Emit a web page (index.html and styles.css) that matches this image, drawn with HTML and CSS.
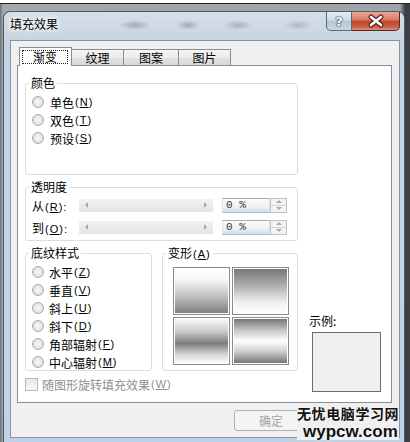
FILE: index.html
```html
<!DOCTYPE html>
<html>

<head>
  <title>填充效果</title>
  <meta charset="UTF-8">
  <link rel="stylesheet" href="styles.css">
</head>

<body>
  <div class="desk-top"></div>
  <div class="window">
    <div class="titlebar">
      <span class="title">填充效果</span>
      <div class="caption-buttons">
        <span class="btn-help">?</span>
        <span class="btn-close">
          <svg width="48" height="19" viewBox="0 0 48 19">
            <path d="M19 5 L29 13 M29 5 L19 13" stroke="#5a1f17" stroke-width="5" stroke-linecap="round"/>
            <path d="M19 5 L29 13 M29 5 L19 13" stroke="#fff" stroke-width="2.6" stroke-linecap="round"/>
          </svg>
        </span>
      </div>
    </div>

    <div class="client">
      <div class="tabs">
        <span class="tab active"><span class="focus">渐变</span></span>
        <span class="tab">纹理</span>
        <span class="tab tab-wide">图案</span>
        <span class="tab">图片</span>
      </div>

      <div class="panel">
        <fieldset class="group group-colors">
          <legend>颜色</legend>
          <div class="radios">
            <label class="radio"><i></i>单色<span class="key">(<u>N</u>)</span></label>
            <label class="radio"><i></i>双色<span class="key">(<u>T</u>)</span></label>
            <label class="radio"><i></i>预设<span class="key">(<u>S</u>)</span></label>
          </div>
        </fieldset>

        <fieldset class="group group-alpha">
          <legend>透明度</legend>
          <div class="alpha-rows">
            <div class="alpha-row">
              <span class="alpha-label">从<span class="key">(<u>R</u>):</span></span>
              <div class="scroll"><i class="arrow-l"></i><i class="arrow-r"></i></div>
              <div class="spin">
                <span class="spin-field">0 %</span>
                <span class="spin-btns"><i class="up"></i><i class="down"></i></span>
              </div>
            </div>
            <div class="alpha-row">
              <span class="alpha-label">到<span class="key">(<u>O</u>):</span></span>
              <div class="scroll"><i class="arrow-l"></i><i class="arrow-r"></i></div>
              <div class="spin">
                <span class="spin-field">0 %</span>
                <span class="spin-btns"><i class="up"></i><i class="down"></i></span>
              </div>
            </div>
          </div>
        </fieldset>

        <fieldset class="group group-shading">
          <legend>底纹样式</legend>
          <div class="radios">
            <label class="radio"><i></i>水平<span class="key">(<u>Z</u>)</span></label>
            <label class="radio"><i></i>垂直<span class="key">(<u>V</u>)</span></label>
            <label class="radio"><i></i>斜上<span class="key">(<u>U</u>)</span></label>
            <label class="radio"><i></i>斜下<span class="key">(<u>D</u>)</span></label>
            <label class="radio"><i></i>角部辐射<span class="key">(<u>F</u>)</span></label>
            <label class="radio"><i></i>中心辐射<span class="key">(<u>M</u>)</span></label>
          </div>
        </fieldset>

        <fieldset class="group group-variants">
          <legend>变形<span class="key">(<u>A</u>)</span></legend>
          <div class="tiles">
            <span class="tile tile-1"></span>
            <span class="tile tile-2"></span>
            <span class="tile tile-3"></span>
            <span class="tile tile-4"></span>
          </div>
        </fieldset>

        <div class="sample">
          <span class="sample-label">示例:</span>
          <div class="sample-box"></div>
        </div>

        <label class="check"><i></i>随图形旋转填充效果<span class="key">(<u>W</u>)</span></label>
      </div>

      <div class="buttons">
        <span class="button">确定</span>
      </div>

      <div class="watermark">
        <div class="wm-cn">无忧电脑学习网</div>
        <div class="wm-en">wypcw.com</div>
      </div>
    </div>
  </div>
</body>
</html>
```

FILE: styles.css
```css
*{
  box-sizing:border-box;
}

html,
body{
  margin:0;
}

body{
  width:410px;
  height:442px;
  overflow:hidden;
  background:linear-gradient(to right, #6d7278 0, #a3a8ad 3px, #9ea4aa 400px, #3c4046 405px);
  font-family:"Noto Sans CJK SC", sans-serif;
  font-size:12px;
  color:#000;
  text-autospace:no-autospace;
}

.key{
  margin-left:1px;
  font-family:"Liberation Sans", sans-serif;
  font-size:11px;
  letter-spacing:1px;
}
.key u{
  text-underline-offset:1px;
}

.desk-top{
  height:4px;
  background:#fff;
  border-bottom:1px solid #1d1d1d;
}

/* window frame */
.window{
  height:431px;
  margin:7px 5px 0 3px;
  padding:0 4px 4px 6px;
  border:1px solid #505a64;
  border-bottom:0;
  border-radius:7px 7px 0 0;
  background:linear-gradient(to bottom, #d6dfe8 0, #c7d4e1 28px, #c2d4e7 60px, #bfd3e8 100%);
  display:flex;
  flex-direction:column;
}

.titlebar{
  height:28px;
  display:flex;
  justify-content:space-between;
  background:
    radial-gradient(ellipse 16px 5px at 125px 13px, rgba(70,80,90,0.35), transparent),
    radial-gradient(ellipse 12px 5px at 178px 13px, rgba(70,80,90,0.35), transparent),
    radial-gradient(ellipse 14px 5px at 228px 13px, rgba(70,80,90,0.3), transparent),
    radial-gradient(ellipse 14px 5px at 288px 13px, rgba(70,80,90,0.25), transparent);
}

.title{
  margin-top:4px;
  line-height:16px;
  text-shadow:0 0 6px #fff, 0 0 6px #fff, 0 0 3px #fff;
}

.caption-buttons{
  display:flex;
}

.btn-help{
  width:26px;
  height:19px;
  border:1px solid #5d6976;
  border-top:0;
  border-radius:0 0 0 5px;
  background:linear-gradient(to bottom, #e4ebf2 0, #d2dce6 45%, #b7c6d5 50%, #c9d6e3 100%);
  display:flex;
  justify-content:center;
  align-items:center;
  color:#fff;
  font:bold 13px "DejaVu Sans", sans-serif;
  text-shadow:0 0 1px #2c3845, 0 0 1px #2c3845, 0 0 2px #2c3845;
}

.btn-close{
  width:48px;
  height:19px;
  border:1px solid #5e2018;
  border-top:0;
  border-left:0;
  border-radius:0 0 5px 0;
  background:linear-gradient(to bottom, #e9a794 0, #d87c65 45%, #c3452e 50%, #cc6249 85%, #df9a80 100%);
}
.btn-close svg{
  display:block;
}

/* client area */
.client{
  position:relative;
  height:398px;
  border:1px solid #8395a9;
  background:#f0f0f0;
}

.tabs{
  position:relative;
  z-index:1;
  height:25px;
  margin-bottom:-1px;
  padding-left:8px;
  display:flex;
  align-items:flex-end;
}

.tab{
  width:53px;
  height:16px;
  margin-bottom:1px;
  margin-left:-1px;
  border:1px solid #898c95;
  border-bottom:0;
  background:linear-gradient(to bottom, #f4f4f4 0, #ececec 50%, #e2e2e2 51%, #d9d9d9 100%);
  text-align:center;
  line-height:15px;
}
.tab-wide{
  width:56px;
}
.tab.active{
  position:relative;
  z-index:2;
  height:19px;
  margin:0;
  background:#fff;
  padding:2px 3px 0 2px;
}
.tab .focus{
  display:block;
  height:14px;
  border:1px dotted #222;
  line-height:12px;
}

.panel{
  height:338px;
  margin:0 7px 0 6px;
  padding:9px 0 0 7px;
  border:1px solid #898c95;
  background:#fff;
  display:grid;
  grid-template-columns:127px 136px 1fr;
  grid-template-rows:100px 62px 126px 16px;
  column-gap:10px;
  row-gap:4px;
}

.group{
  margin:0;
  padding:0;
  min-width:0;
  border:1px solid #d5dfe5;
  border-radius:3px;
}
.group legend{
  margin-left:3px;
  padding:0 2px;
  line-height:16px;
}
.group-colors{
  grid-column:1 / 3;
  grid-row:1;
}
.group-alpha{
  grid-column:1 / 3;
  grid-row:2;
}
.group-shading{
  grid-column:1;
  grid-row:3;
}
.group-variants{
  grid-column:2;
  grid-row:3;
}

.radios{
  padding:2px 0 0 6px;
}
.radio{
  height:18px;
  display:flex;
  align-items:center;
  white-space:nowrap;
}
.radio i{
  flex:none;
  width:12px;
  height:12px;
  margin-right:6px;
  border:1px solid #a9a9a9;
  border-radius:50%;
  background:radial-gradient(circle at 50% 50%, #fafafa 0, #e6e6e6 55%, #cfcfcf 100%);
}
.group-shading .radio i{
  margin-right:5px;
}

/* transparency rows */
.alpha-rows{
  padding-left:6px;
  display:flex;
  flex-direction:column;
  gap:2px;
}
.alpha-row{
  height:20px;
  display:flex;
  align-items:center;
}
.alpha-label{
  width:47px;
}
.scroll{
  width:134px;
  height:13px;
  padding:0 6px;
  background:linear-gradient(to bottom, #f1f1f1, #e5e5e5);
  display:flex;
  justify-content:space-between;
  align-items:center;
}
.arrow-l{
  border-top:3px solid transparent;
  border-bottom:3px solid transparent;
  border-right:3px solid #a7a7a7;
}
.arrow-r{
  border-top:3px solid transparent;
  border-bottom:3px solid transparent;
  border-left:3px solid #a7a7a7;
}

.spin{
  margin-left:9px;
  height:15px;
  display:flex;
}
.spin-field{
  width:48px;
  padding-left:3px;
  border:1px solid;
  border-color:#abadb3 #dbdfe6 #a6bfd8 #e2e3ea;
  background:linear-gradient(to bottom, #fbfbfb 0, #f0f0f0 60%, #cddcec 100%);
  line-height:13px;
  font-family:"Liberation Mono", monospace;
  font-size:11px;
  color:#333;
}
.spin-btns{
  width:17px;
  display:flex;
  flex-direction:column;
  border:1px solid #c3c3c3;
  background:#f3f3f3;
}
.spin-btns i{
  flex:1;
  display:flex;
  justify-content:center;
  align-items:center;
}
.spin-btns .up{
  border-bottom:1px solid #d2d2d2;
}
.spin-btns .up::after{
  content:"";
  border-left:3px solid transparent;
  border-right:3px solid transparent;
  border-bottom:3px solid #a9a9a9;
}
.spin-btns .down::after{
  content:"";
  border-left:3px solid transparent;
  border-right:3px solid transparent;
  border-top:3px solid #a9a9a9;
}

/* variant tiles */
.tiles{
  padding:5px 0 0 10px;
  display:grid;
  grid-template-columns:57px 57px;
  grid-template-rows:48px 48px;
  gap:2px;
}
.tile{
  border:1px solid #8a8a8a;
  box-shadow:inset 0 0 0 1px #fff;
}
.tile-1{
  background:linear-gradient(to bottom, #fff 0, #f6f6f6 25%, #c4c4c4 60%, #7a7a7a 100%);
}
.tile-2{
  background:linear-gradient(to bottom, #737373 0, #a9a9a9 35%, #f0f0f0 75%, #fff 100%);
}
.tile-3{
  background:linear-gradient(to bottom, #fff 0, #c8c8c8 30%, #7c7c7c 55%, #d8d8d8 80%, #fff 100%);
}
.tile-4{
  background:linear-gradient(to bottom, #6f6f6f 0, #d0d0d0 30%, #fff 50%, #d0d0d0 72%, #6f6f6f 100%);
}

.sample{
  grid-column:3;
  grid-row:3 / 5;
  align-self:end;
  margin-bottom:-1px;
  padding-left:1px;
  display:flex;
  flex-direction:column;
}
.sample-label{
  line-height:16px;
}
.sample-box{
  width:69px;
  height:60px;
  margin:3px 0 0 3px;
  border:1px solid #6b6b6b;
  background:#f0f0f0;
}

.check{
  grid-column:1 / 3;
  grid-row:4;
  align-self:end;
  display:flex;
  align-items:center;
  color:#8f8f8f;
  line-height:13px;
}
.check i{
  width:13px;
  height:13px;
  margin-right:4px;
  border:1px solid #b9b9b9;
  background:linear-gradient(to bottom, #e8e8e8, #f9f9f9);
}

.buttons{
  margin-top:7px;
  padding-right:91px;
  display:flex;
  justify-content:flex-end;
}
.button{
  width:74px;
  height:21px;
  border:1px solid #adb2b5;
  border-radius:3px;
  background:#f4f4f4;
  color:#a3a3a3;
  text-align:center;
  line-height:19px;
}

/* site watermark stamped over the corner */
.watermark{
  position:absolute;
  left:286px;
  top:362px;
  width:102px;
  height:37px;
  background:#f0f0f0;
  color:#111;
  white-space:nowrap;
  text-shadow:0 0 1px #fff, 0 0 2px #fff;
}
.wm-cn{
  font-weight:bold;
  font-size:14px;
  letter-spacing:0.6px;
  line-height:20px;
}
.wm-en{
  padding-left:6px;
  font-family:"Liberation Sans", sans-serif;
  font-weight:bold;
  font-size:17px;
  line-height:17px;
}
```
